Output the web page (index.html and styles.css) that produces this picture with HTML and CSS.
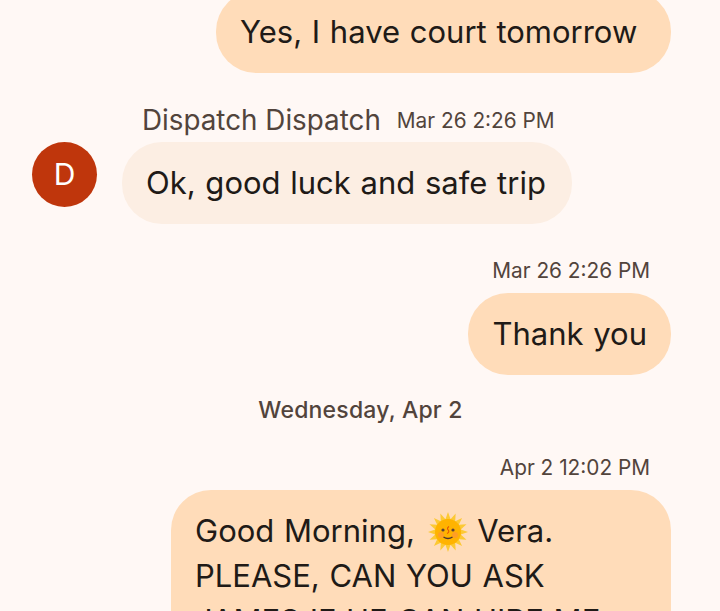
FILE: index.html
```html
<!DOCTYPE html>
<html lang="en">
<head>
  <meta charset="UTF-8">
  <title>Messages</title>
  <link rel="stylesheet" href="styles.css">
</head>
<body>
<div class="thread">
  <div class="row mine first">
    <div class="bubble">Yes, I have court tomorrow&nbsp;</div>
  </div>

  <div class="row theirs">
    <div class="avatar">D</div>
    <div class="stack">
      <div class="meta">
        <span class="sender">Dispatch Dispatch</span>
        <span class="time">Mar 26 2:26 PM</span>
      </div>
      <div class="bubble">Ok, good luck and safe trip</div>
    </div>
  </div>

  <div class="row mine">
    <div class="stack">
      <div class="meta"><span class="time">Mar 26 2:26 PM</span></div>
      <div class="bubble">Thank you</div>
    </div>
  </div>

  <div class="day">Wednesday, Apr 2</div>

  <div class="row mine last">
    <div class="stack">
      <div class="meta"><span class="time">Apr 2 12:02 PM</span></div>
      <div class="bubble long">Good Morning, <svg class="sun" viewBox="0 0 40 40"><polygon fill="#fcc934" points="20,0 22.54,7.25 27.65,1.5 27.22,9.2 34.1,5.9 30.8,12.78 38.5,12.35 32.75,17.46 40,20 32.75,22.54 38.5,27.65 30.8,27.22 34.1,34.1 27.22,30.8 27.65,38.5 22.54,32.75 20,40 17.46,32.75 12.35,38.5 12.78,30.8 5.9,34.1 9.2,27.22 1.5,27.65 7.25,22.54 0,20 7.25,17.46 1.5,12.35 9.2,12.78 5.9,5.9 12.78,9.2 12.35,1.5 17.46,7.25"/><circle cx="20" cy="20" r="13" fill="#ffb300"/><circle cx="13" cy="23" r="3" fill="#ff8f3c" opacity=".6"/><circle cx="27" cy="23" r="3" fill="#ff8f3c" opacity=".6"/><circle cx="15" cy="18" r="1.600" fill="#5d4037"/><circle cx="25" cy="18" r="1.600" fill="#5d4037"/><path d="M21 14.500q-2.500 1.500-.800 3.500t-1.200 3.500" fill="none" stroke="#e65100" stroke-width="1.100"/><path d="M15.500 25q4.500 3 9 0" fill="none" stroke="#4e342e" stroke-width="1.400"/></svg> Vera.<br>PLEASE, CAN YOU ASK<br>JAMES IF HE CAN HIRE ME</div>
    </div>
  </div>
</div>
</body>
</html>
```

FILE: styles.css
```css
html, body { height: 100%; }
body {
  margin: 0;
  background: #fff8f5;
  color: #201a17;
  font-family: Inter, Roboto, sans-serif;
  overflow: hidden;
}
.thread {
  display: flex;
  flex-direction: column;
  height: 611px;
  padding: 0 49px 0 32px;
  overflow: hidden;
}
.row { display: flex; flex-shrink: 0; }
.row.mine { justify-content: flex-end; margin-top: 34px; }
.row.mine.first { margin-top: -9px; }
.row.theirs { margin-top: 35px; gap: 25px; align-items: flex-end; }
.row.last { margin-top: 31px; }
.stack { display: flex; flex-direction: column; }
.mine .stack { align-items: flex-end; }
.theirs .stack { align-items: flex-start; }

.avatar {
  flex-shrink: 0;
  width: 65px;
  height: 65px;
  margin-bottom: 17px;
  border-radius: 50%;
  background: #bf360c;
  color: #fff;
  font-size: 30px;
  line-height: 65px;
  text-align: center;
}
.meta {
  display: flex;
  align-items: center;
  gap: 16px;
  height: 24px;
  margin-bottom: 11px;
  padding: 0 21px 0 20px;
  color: #52443c;
}
.theirs .meta { margin-bottom: 10px; }
.sender { font-size: 27.800px; }
.time { font-size: 20.800px; }

.bubble {
  padding: 18px 24px 19px;
  border-radius: 40px;
  background: #ffdcb9;
  font-size: 31px;
  line-height: 45px;
  word-spacing: 1px;
  white-space: nowrap;
}
.theirs .bubble { background: #fceee3; padding-right: 26px; }
.bubble.long { box-sizing: border-box; width: 500px; }
.sun {
  width: 40px;
  height: 40px;
  margin-left: 3px;
  vertical-align: -10px;
}
.day {
  flex-shrink: 0;
  margin-top: 21px;
  padding-left: 18px;
  font-size: 23px;
  font-weight: 500;
  letter-spacing: .2px;
  line-height: 28px;
  color: #52443c;
  text-align: center;
}
```
